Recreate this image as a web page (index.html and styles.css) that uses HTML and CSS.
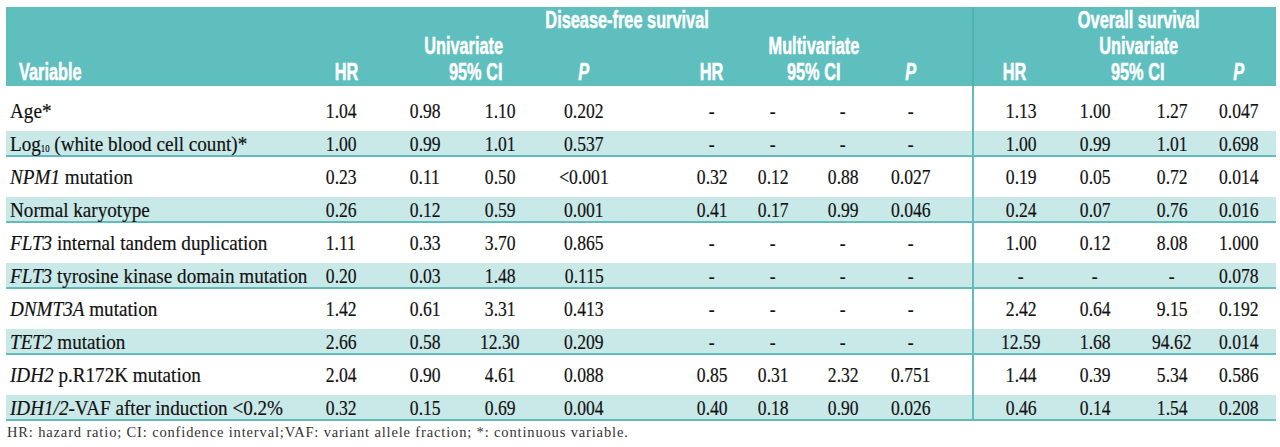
FILE: index.html
```html
<!DOCTYPE html>
<html lang="en">
<head>
<meta charset="utf-8">
<title>Survival analysis table</title>
<link rel="stylesheet" href="styles.css">
</head>
<body>
<div class="table">
  <div class="head">
    <div class="h g-dfs"><span>Disease-free survival</span></div>
    <div class="h g-os div"><span>Overall survival</span></div>
    <div class="h g-uni1"><span>Univariate</span></div>
    <div class="h g-multi"><span>Multivariate</span></div>
    <div class="h g-uni3 div"><span>Univariate</span></div>
    <div class="h var"><span>Variable</span></div>
    <div class="h hr1"><span>HR</span></div>
    <div class="h ci1"><span>95% CI</span></div>
    <div class="h p1"><span><i>P</i></span></div>
    <div class="h hr2"><span>HR</span></div>
    <div class="h ci2"><span>95% CI</span></div>
    <div class="h p2"><span><i>P</i></span></div>
    <div class="h hr3 div"><span>HR</span></div>
    <div class="h ci3"><span>95% CI</span></div>
    <div class="h p3"><span><i>P</i></span></div>
  </div>

  <div class="row first">
    <div class="v"><span>Age*</span></div>
    <div><span>1.04</span></div><div><span>0.98</span></div><div><span>1.10</span></div><div class="pa"><span>0.202</span></div>
    <div><span>-</span></div><div><span>-</span></div><div><span>-</span></div><div class="pb"><span>-</span></div>
    <div class="div"><span>1.13</span></div><div><span>1.00</span></div><div><span>1.27</span></div><div class="pc"><span>0.047</span></div>
  </div>
  <div class="row alt">
    <div class="v"><span>Log<sub>10</sub> (white blood cell count)*</span></div>
    <div><span>1.00</span></div><div><span>0.99</span></div><div><span>1.01</span></div><div class="pa"><span>0.537</span></div>
    <div><span>-</span></div><div><span>-</span></div><div><span>-</span></div><div class="pb"><span>-</span></div>
    <div class="div"><span>1.00</span></div><div><span>0.99</span></div><div><span>1.01</span></div><div class="pc"><span>0.698</span></div>
  </div>
  <div class="row">
    <div class="v"><span><i>NPM1</i> mutation</span></div>
    <div><span>0.23</span></div><div><span>0.11</span></div><div><span>0.50</span></div><div class="pa"><span>&lt;0.001</span></div>
    <div><span>0.32</span></div><div><span>0.12</span></div><div><span>0.88</span></div><div class="pb"><span>0.027</span></div>
    <div class="div"><span>0.19</span></div><div><span>0.05</span></div><div><span>0.72</span></div><div class="pc"><span>0.014</span></div>
  </div>
  <div class="row alt">
    <div class="v"><span>Normal karyotype</span></div>
    <div><span>0.26</span></div><div><span>0.12</span></div><div><span>0.59</span></div><div class="pa"><span>0.001</span></div>
    <div><span>0.41</span></div><div><span>0.17</span></div><div><span>0.99</span></div><div class="pb"><span>0.046</span></div>
    <div class="div"><span>0.24</span></div><div><span>0.07</span></div><div><span>0.76</span></div><div class="pc"><span>0.016</span></div>
  </div>
  <div class="row">
    <div class="v"><span><i>FLT3</i> internal tandem duplication</span></div>
    <div><span>1.11</span></div><div><span>0.33</span></div><div><span>3.70</span></div><div class="pa"><span>0.865</span></div>
    <div><span>-</span></div><div><span>-</span></div><div><span>-</span></div><div class="pb"><span>-</span></div>
    <div class="div"><span>1.00</span></div><div><span>0.12</span></div><div><span>8.08</span></div><div class="pc"><span>1.000</span></div>
  </div>
  <div class="row alt">
    <div class="v"><span><i>FLT3</i> tyrosine kinase domain mutation</span></div>
    <div><span>0.20</span></div><div><span>0.03</span></div><div><span>1.48</span></div><div class="pa"><span>0.115</span></div>
    <div><span>-</span></div><div><span>-</span></div><div><span>-</span></div><div class="pb"><span>-</span></div>
    <div class="div"><span>-</span></div><div><span>-</span></div><div><span>-</span></div><div class="pc"><span>0.078</span></div>
  </div>
  <div class="row">
    <div class="v"><span><i>DNMT3A</i> mutation</span></div>
    <div><span>1.42</span></div><div><span>0.61</span></div><div><span>3.31</span></div><div class="pa"><span>0.413</span></div>
    <div><span>-</span></div><div><span>-</span></div><div><span>-</span></div><div class="pb"><span>-</span></div>
    <div class="div"><span>2.42</span></div><div><span>0.64</span></div><div><span>9.15</span></div><div class="pc"><span>0.192</span></div>
  </div>
  <div class="row alt">
    <div class="v"><span><i>TET2</i> mutation</span></div>
    <div><span>2.66</span></div><div><span>0.58</span></div><div><span>12.30</span></div><div class="pa"><span>0.209</span></div>
    <div><span>-</span></div><div><span>-</span></div><div><span>-</span></div><div class="pb"><span>-</span></div>
    <div class="div"><span>12.59</span></div><div><span>1.68</span></div><div><span>94.62</span></div><div class="pc"><span>0.014</span></div>
  </div>
  <div class="row">
    <div class="v"><span><i>IDH2</i> p.R172K mutation</span></div>
    <div><span>2.04</span></div><div><span>0.90</span></div><div><span>4.61</span></div><div class="pa"><span>0.088</span></div>
    <div><span>0.85</span></div><div><span>0.31</span></div><div><span>2.32</span></div><div class="pb"><span>0.751</span></div>
    <div class="div"><span>1.44</span></div><div><span>0.39</span></div><div><span>5.34</span></div><div class="pc"><span>0.586</span></div>
  </div>
  <div class="row alt">
    <div class="v"><span><i>IDH1/2</i>-VAF after induction &lt;0.2%</span></div>
    <div><span>0.32</span></div><div><span>0.15</span></div><div><span>0.69</span></div><div class="pa"><span>0.004</span></div>
    <div><span>0.40</span></div><div><span>0.18</span></div><div><span>0.90</span></div><div class="pb"><span>0.026</span></div>
    <div class="div"><span>0.46</span></div><div><span>0.14</span></div><div><span>1.54</span></div><div class="pc"><span>0.208</span></div>
  </div>

  <p class="note">HR: hazard ratio; CI: confidence interval;VAF: variant allele fraction; *: continuous variable.</p>
</div>
</body>
</html>
```

FILE: styles.css
```css
body {
  margin: 0;
  background: #ffffff;
}

.table {
  margin: 7px 0 0 6px;
  width: 1270px;
}

.head,
.row {
  display: grid;
  grid-template-columns: 293px 84px 84px 66px 147px 64px 58px 82px 88px 96px 54px 100px 54px;
}

/* ---------- header ---------- */
.head {
  background: #5fbfbe;
  height: 79px;
  grid-template-rows: 26px 26px 27px;
  color: #ffffff;
  font-family: "Liberation Sans", Arial, sans-serif;
  font-weight: bold;
  font-size: 23px;
  line-height: 26px;
  white-space: nowrap;
  -webkit-text-stroke: 0.5px #ffffff;
}

.h {
  text-align: center;
}

.h span {
  display: inline-block;
  transform: scaleX(0.71);
  transform-origin: center;
}

.h.div {
  border-left: 2px solid #52b0af;
}

.g-dfs { grid-column: 2 / 10; grid-row: 1; padding-right: 17px; }
.g-os { grid-column: 10 / 14; grid-row: 1; padding-left: 28px; }
.g-uni1 { grid-column: 3 / 5; grid-row: 2; padding-left: 11px; }
.g-multi { grid-column: 7 / 9; grid-row: 2; }
.g-uni3 { grid-column: 10 / 14; grid-row: 2; padding-left: 28px; }

.var { grid-column: 1; grid-row: 3; text-align: left; padding-left: 13px; }
.var span { transform-origin: left; }
.hr1 { grid-column: 2; grid-row: 3; padding-left: 11px; }
.ci1 { grid-column: 3 / 5; grid-row: 3; padding-left: 36px; }
.p1 { grid-column: 5; grid-row: 3; padding-right: 45px; }
.hr2 { grid-column: 6; grid-row: 3; }
.ci2 { grid-column: 7 / 9; grid-row: 3; }
.p2 { grid-column: 9; grid-row: 3; padding-right: 34px; }
.hr3 { grid-column: 10; grid-row: 3; padding-right: 13px; }
.ci3 { grid-column: 11 / 13; grid-row: 3; padding-right: 15px; }
.p3 { grid-column: 13; grid-row: 3; padding-right: 20px; }

/* ---------- body rows ---------- */
.row {
  height: 40px;
  font-family: "Liberation Serif", "Times New Roman", serif;
  font-size: 22px;
  color: #111111;
  white-space: nowrap;
  -webkit-text-stroke: 0.2px #111111;
}

.row.first {
  height: 45px;
}

.row.first > div {
  padding-top: 5px;
}

.row.alt {
  height: 24px;
  background: #c9e9e8;
  border-bottom: 2px solid #62bcbb;
}

.row > div {
  display: flex;
  align-items: center;
  justify-content: center;
}

.row > div > span {
  display: inline-block;
  transform: scaleX(0.8);
  transform-origin: center;
}

.row > .v {
  justify-content: flex-start;
  padding-left: 4px;
}

.row > .v > span {
  transform: scaleX(0.87);
  transform-origin: left;
}

.row sub {
  font-size: 10px;
  vertical-align: -1px;
  line-height: 0;
}

.row > .pa { padding-right: 45px; }
.row > .pb { padding-right: 34px; }
.row > .pc { padding-right: 20px; }

.row > .div {
  border-left: 2px solid #62bcbb;
}

/* ---------- footnote ---------- */
.note {
  margin: 2px 0 0 1px;
  font-family: "Liberation Serif", "Times New Roman", serif;
  font-size: 14.5px;
  line-height: 18px;
  letter-spacing: 0.85px;
  color: #333333;
  white-space: nowrap;
}
```
